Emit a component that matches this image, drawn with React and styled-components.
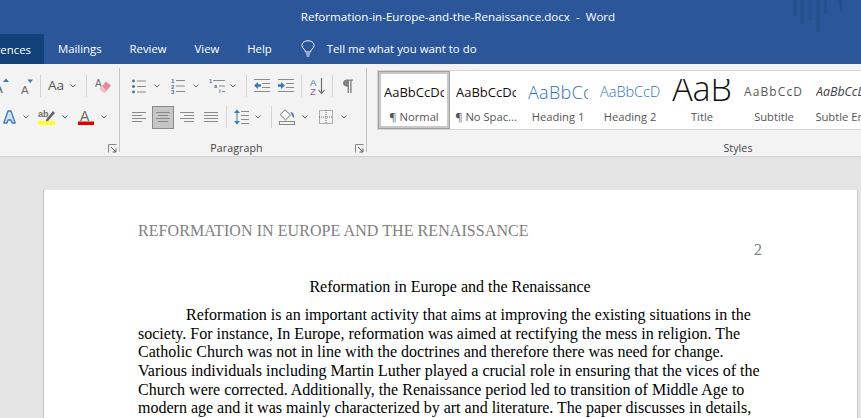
import styled, { createGlobalStyle } from "styled-components";

const GlobalStyle = createGlobalStyle`
  html, body {
    margin: 0;
    padding: 0;
    background: #e4e4e4;
  }
  body {
    font-family: "Open Sans", "Noto Sans", sans-serif;
  }
`

const Window = styled('div')`
  width: 861px;
  height: 418px;
  overflow: hidden;
  display: flex;
  flex-direction: column;
  background: #e4e4e4;
`

const TitleBar = styled('div')`
  position: relative;
  height: 32px;
  flex-shrink: 0;
  display: flex;
  align-items: center;
  justify-content: center;
  padding-left: 55px;
  background: #2b579a;
  color: #fff;
  font-size: 11.6px;
  white-space: pre;
`

const TitleArt = styled('svg')`
  position: absolute;
  top: 0;
  right: 18px;
`

const Tabs = styled('div')`
  height: 32px;
  flex-shrink: 0;
  display: flex;
  align-items: stretch;
  background: #2b579a;
  color: #fff;
  font-size: 11.4px;
`

const Tab = styled('div')`
  display: flex;
  align-items: center;
  padding: 0 13.9px;
`

const ActiveTab = styled(Tab)`
  width: 44px;
  box-sizing: border-box;
  justify-content: flex-end;
  overflow: hidden;
  padding: 0 13px 0 0;
  margin-top: 2px;
  background: #124078;
`

const TellMe = styled('div')`
  display: flex;
  align-items: center;
  gap: 12px;
  margin-left: 15px;
`

const Ribbon = styled('div')`
  height: 92px;
  flex-shrink: 0;
  display: flex;
  overflow: hidden;
  background: #f3f3f3;
  border-bottom: 1px solid #d2d2d2;
  color: #444;
`

const Group = styled('div')`
  position: relative;
  flex-shrink: 0;
  box-sizing: border-box;
  width: ${p => p.$w}px;
  display: flex;
  flex-direction: column;
  overflow: hidden;
  padding: 10px 0 0 ${p => p.$pl || 0}px;
`

const GroupEnd = styled('div')`
  flex-shrink: 0;
  width: 1px;
  margin: 4px 0 4px;
  background: #c4c4c4;
`

const Row = styled('div')`
  height: 24px;
  display: flex;
  align-items: center;
  margin-bottom: 7px;
`

const Tool = styled('div')`
  display: flex;
  align-items: center;
  flex-shrink: 0;
  gap: ${p => p.$gap ?? 6}px;
  margin-left: ${p => p.$ml || 0}px;
`

const Selected = styled(Tool)`
  width: 22px;
  height: 23px;
  justify-content: center;
  box-sizing: border-box;
  background: #c6c6c6;
  border: 1px solid #8a8a8a;
`

const Sep = styled('div')`
  width: 1px;
  height: 22px;
  flex-shrink: 0;
  margin-left: ${p => p.$ml || 0}px;
  background: #d4d4d4;
`

const CaseLabel = styled('span')`
  font-size: 13.5px;
  line-height: 1;
  color: #555;
`

const GroupFooter = styled('div')`
  margin-top: auto;
  display: flex;
  align-items: center;
  height: 16px;
  margin-left: ${p => p.$ml || 0}px;
`

const GroupLabel = styled('div')`
  flex: 1;
  text-align: center;
  font-size: 10.6px;
  letter-spacing: 0.1px;
  color: #444;
`

const Launcher = styled('svg')`
  flex-shrink: 0;
  margin: 0 2px 0 2px;
`

const Gallery = styled('div')`
  height: 60px;
  margin-top: -4px;
  margin-left: 10px;
  display: flex;
  box-sizing: border-box;
  background: #fff;
  border: 1px solid #d6d6d6;
`

const StyleItem = styled('div')`
  width: 72px;
  height: 100%;
  flex-shrink: 0;
  box-sizing: border-box;
  display: flex;
  flex-direction: column;
  align-items: center;
  border: 3px solid ${p => (p.$selected ? '#c8c8c8' : 'transparent')};
  outline: ${p => (p.$selected ? '1px solid #a0a0a0' : 'none')};
  outline-offset: -1px;
`

const Preview = styled('div')`
  width: 60px;
  height: 35px;
  flex-shrink: 0;
  box-sizing: border-box;
  display: flex;
  align-items: center;
  overflow: hidden;
  white-space: nowrap;
  line-height: 20px;
  font-size: ${p => p.$size}px;
  font-weight: ${p => p.$weight || 400};
  font-style: ${p => p.$italic ? 'italic' : 'normal'};
  letter-spacing: ${p => p.$spacing || 0}px;
  color: ${p => p.$color};
`

// the big Title sample is cut off by the top of its cell
const TitlePreview = styled(Preview)`
  height: 30px;
  margin-top: 5px;
  padding-bottom: 12px;
  justify-content: center;
`

const StyleName = styled('div')`
  font-size: 11.2px;
  line-height: 16px;
  white-space: nowrap;
  color: #555;
`

const DocArea = styled('div')`
  flex: 1;
  min-height: 0;
  padding: 33px 0 0 43px;
  background: #e4e4e4;
`

const Page = styled('div')`
  width: 815px;
  box-sizing: border-box;
  height: 400px;
  padding: 32px 95px 0 94px;
  background: #fff;
  border-left: 1px solid #c6c6c6;
  border-right: 1px solid #c6c6c6;
  font-family: "Liberation Serif", "Times New Roman", serif;
  font-size: 16px;
  line-height: 18.4px;
  color: #000;
`

const RunningHead = styled('div')`
  color: #808080;
  letter-spacing: 0.07px;
`

const PageNumber = styled('div')`
  text-align: right;
  color: #808080;
  margin-top: 1px;
`

const DocTitle = styled('div')`
  text-align: center;
  margin-top: 18px;
`

const BodyText = styled('p')`
  margin: 10px 0 0;
  line-height: 18.6px;
  text-indent: 48px;
`

const grey = '#6b6b6b'
const lightGrey = '#8a8a8a'
const blue = '#3f78b5'

const Chevron = () => (
  <svg width="6" height="4" viewBox="0 0 6 4">
    <path d="M0.5 0.5 L3 3 L5.5 0.5" fill="none" stroke="#666" strokeWidth="1" />
  </svg>
)

const Lines = ({ width = 14, rows }) => (
  <svg width={width} height="14" viewBox={`0 0 ${width} 14`}>
    {rows.map(([x1, x2, y], i) => (
      <line key={i} x1={x1} x2={x2} y1={y + 0.5} y2={y + 0.5} stroke={lightGrey} />
    ))}
  </svg>
)

const AlignLeft = () => <Lines rows={[[0, 14, 2], [0, 10, 5], [0, 14, 8], [0, 10, 11]]} />
const AlignCenter = () => <Lines rows={[[0, 14, 2], [2, 12, 5], [0, 14, 8], [2, 12, 11]]} />
const AlignRight = () => <Lines rows={[[0, 14, 2], [4, 14, 5], [0, 14, 8], [4, 14, 11]]} />
const Justify = () => <Lines rows={[[0, 14, 2], [0, 14, 5], [0, 14, 8], [0, 14, 11]]} />

const Bullets = () => (
  <svg width="14" height="15" viewBox="0 0 14 15">
    {[2, 7.5, 13].map(y => (
      <g key={y}>
        <circle cx="1.5" cy={y} r="1.4" fill="#4a6f9c" />
        <line x1="5" x2="14" y1={y} y2={y} stroke={lightGrey} />
      </g>
    ))}
  </svg>
)

const Numbering = () => (
  <svg width="14" height="16" viewBox="0 0 14 16">
    {['1', '2', '3'].map((n, i) => (
      <g key={n}>
        <text x="0" y={5 + i * 5.5} fontSize="6" fontWeight="700" fill="#4a6f9c" fontFamily="Liberation Sans">{n}</text>
        <line x1="5" x2="14" y1={2.5 + i * 5.5} y2={2.5 + i * 5.5} stroke={lightGrey} />
      </g>
    ))}
  </svg>
)

const Multilevel = () => (
  <svg width="16" height="16" viewBox="0 0 16 16">
    <text x="0" y="5" fontSize="5.5" fontWeight="700" fill="#4a6f9c" fontFamily="Liberation Sans">1</text>
    <line x1="4" x2="16" y1="2.5" y2="2.5" stroke={lightGrey} />
    <text x="5" y="10" fontSize="5.5" fontWeight="700" fill="#4a6f9c" fontFamily="Liberation Sans">a</text>
    <line x1="10" x2="16" y1="8" y2="8" stroke={lightGrey} />
    <text x="10" y="15" fontSize="5.5" fontWeight="700" fill="#4a6f9c" fontFamily="Liberation Sans">i</text>
    <line x1="13" x2="16" y1="13.5" y2="13.5" stroke={lightGrey} />
  </svg>
)

const IndentLess = () => (
  <svg width="16" height="14" viewBox="0 0 16 14">
    <line x1="0" x2="16" y1="0.5" y2="0.5" stroke={lightGrey} />
    <line x1="8" x2="16" y1="4.5" y2="4.5" stroke={lightGrey} />
    <line x1="8" x2="16" y1="8.5" y2="8.5" stroke={lightGrey} />
    <line x1="0" x2="16" y1="12.5" y2="12.5" stroke={lightGrey} />
    <path d="M0 6.5 L4 3 V5.3 H7 V7.7 H4 V10 Z" fill={blue} />
  </svg>
)

const IndentMore = () => (
  <svg width="16" height="14" viewBox="0 0 16 14">
    <line x1="0" x2="16" y1="0.5" y2="0.5" stroke={lightGrey} />
    <line x1="8" x2="16" y1="4.5" y2="4.5" stroke={lightGrey} />
    <line x1="8" x2="16" y1="8.5" y2="8.5" stroke={lightGrey} />
    <line x1="0" x2="16" y1="12.5" y2="12.5" stroke={lightGrey} />
    <path d="M7 6.5 L3 3 V5.3 H0 V7.7 H3 V10 Z" fill={blue} />
  </svg>
)

const Sort = () => (
  <svg width="15" height="17" viewBox="0 0 15 17">
    <text x="0" y="8" fontSize="9.5" fill={blue} fontFamily="Liberation Sans">A</text>
    <text x="0" y="16.5" fontSize="9.5" fill="#8e5aa8" fontFamily="Liberation Sans">Z</text>
    <path d="M11.5 0 V15 M8.5 12 L11.5 15.5 L14.5 12" fill="none" stroke="#666" strokeWidth="1.1" />
  </svg>
)

const Pilcrow = () => (
  <svg width="10" height="14" viewBox="0 0 10 14">
    <path d="M4 0.5 H10 V1.8 H8.6 V14 H7.2 V1.8 H6 V14 H4.6 V7.8 C1.5 7.8 0 6 0 4.1 C0 2 1.6 0.5 4 0.5 Z" fill="#808080" />
  </svg>
)

const LineSpacing = () => (
  <svg width="15" height="16" viewBox="0 0 15 16">
    <path d="M3 0.5 L6 4 H0 Z M3 15.5 L6 12 H0 Z" fill={blue} />
    <line x1="3" x2="3" y1="3" y2="13" stroke={blue} />
    {[2, 6, 10, 14].map(y => <line key={y} x1="7" x2="15" y1={y + 0.5} y2={y + 0.5} stroke={lightGrey} />)}
  </svg>
)

const Shading = () => (
  <svg width="16" height="16" viewBox="0 0 16 16">
    <path d="M6 0.8 L11.5 6 L6.5 10.8 L1.2 5.6 Z" fill="#fff" stroke={grey} />
    <path d="M11.5 3 C13.5 3 15 4.5 15 7.5 C15 9 13.5 9 13.5 7.5 Z" fill={blue} />
    <rect x="0.5" y="12.5" width="15" height="3" fill="#f3f3f3" stroke="#8a8a8a" />
  </svg>
)

const Borders = () => (
  <svg width="14" height="14" viewBox="0 0 14 14">
    <rect x="0.5" y="0.5" width="13" height="13" fill="none" stroke={grey} strokeDasharray="1 1" />
    <line x1="7" x2="7" y1="0" y2="14" stroke={grey} strokeDasharray="1 1" />
    <line x1="0" x2="14" y1="7" y2="7" stroke={grey} strokeDasharray="1 1" />
  </svg>
)

const FontGrow = () => (
  <svg width="16" height="16" viewBox="0 0 16 16">
    <text x="0" y="15" fontSize="15" fill={grey} fontFamily="Liberation Sans">A</text>
    <path d="M10 4 L13 0.5 L16 4 Z" fill={blue} />
  </svg>
)

const FontShrink = () => (
  <svg width="12" height="15" viewBox="0 0 12 15">
    <text x="0" y="14.5" fontSize="11.5" fill={grey} fontFamily="Liberation Sans">A</text>
    <path d="M6.5 0.5 H12 L9.2 4 Z" fill={blue} />
  </svg>
)

const ClearFormat = () => (
  <svg width="17" height="16" viewBox="0 0 17 16">
    <text x="0" y="9" fontSize="10" fill={grey} fontFamily="Liberation Sans">A</text>
    <path d="M4.5 11 L11 3.5 L16 7.5 L9.5 15 Z" fill="#e58a9b" />
    <path d="M4.5 11 L7 8 L11 12 L9.5 15 Z" fill="#f3c3cd" />
  </svg>
)

const TextEffects = () => (
  <svg width="13" height="14" viewBox="0 0 13 14">
    <path d="M0.8 13 L5 1 H8 L12.2 13 H9 L8 10 H5 L4 13 Z" fill="#cfe0f2" stroke={blue} strokeWidth="1.3" strokeLinejoin="round" />
  </svg>
)

const Highlight = () => (
  <svg width="18" height="16" viewBox="0 0 18 16">
    <text x="0" y="8" fontSize="9" fontWeight="700" fill={grey} fontFamily="Liberation Sans">ab</text>
    <path d="M8 10.5 L15 2 L17 4 L10 12 H8 Z" fill="#666" />
    <rect x="0" y="12" width="17" height="4" fill="#ffff30" />
  </svg>
)

const FontColor = () => (
  <svg width="16" height="16" viewBox="0 0 16 16">
    <text x="2" y="11.5" fontSize="14" fill={grey} fontFamily="Liberation Sans">A</text>
    <rect x="0" y="12.5" width="16" height="3.5" fill="#e00000" />
  </svg>
)

const Bulb = () => (
  <svg width="14" height="17" viewBox="0 0 14 17">
    <path d="M4.5 12 C4.5 9.5 1 8.5 1 5.5 C1 2.8 3.5 0.8 7 0.8 C10.5 0.8 13 2.8 13 5.5 C13 8.5 9.5 9.5 9.5 12 Z" fill="none" stroke="#fff" />
    <path d="M5 14 H9 M5.5 16 H8.5" stroke="#fff" />
  </svg>
)

const DialogLauncher = () => (
  <Launcher width="9" height="9" viewBox="0 0 9 9">
    <path d="M0.5 8.5 V0.5 H8.5" fill="none" stroke="#8a8a8a" />
    <path d="M3 3 L8 8 M8 4.5 V8 H4.5" fill="none" stroke="#666" />
  </Launcher>
)

const galleryStyles = [
  { name: '¶ Normal', preview: 'AaBbCcDc', size: 13, color: '#111', selected: true },
  { name: '¶ No Spac...', preview: 'AaBbCcDc', size: 13, color: '#111' },
  { name: 'Heading 1', preview: 'AaBbCc', size: 18, color: '#2e74b5', weight: 300, spacing: 0.3 },
  { name: 'Heading 2', preview: 'AaBbCcD', size: 14.5, color: '#2e74b5', weight: 300 },
  { name: 'Title', preview: 'AaB', size: 34, color: '#111', weight: 300, big: true },
  { name: 'Subtitle', preview: 'AaBbCcD', size: 12, color: '#595959', spacing: 1.1 },
  { name: 'Subtle Em...', preview: 'AaBbCcDc', size: 12.4, color: '#404040', italic: true },
]

const App = () => {
  return (
    <Window>
      <GlobalStyle />
      <TitleBar>
        Reformation-in-Europe-and-the-Renaissance.docx  -  Word
        <TitleArt width="50" height="32" viewBox="0 0 50 32">
          <rect x="0" y="0" width="4" height="16" fill="#224a85" opacity="0.6" />
          <rect x="7" y="0" width="4" height="24" fill="#224a85" opacity="0.6" />
          <rect x="15" y="0" width="4" height="20" fill="#224a85" opacity="0.55" />
          <rect x="23" y="0" width="4" height="32" fill="#224a85" opacity="0.6" />
          <rect x="31" y="0" width="3" height="14" fill="#224a85" opacity="0.5" />
          <path d="M44 0 H49 L49 13 Z" fill="#224a85" opacity="0.6" />
        </TitleArt>
      </TitleBar>
      <Tabs>
        <ActiveTab>References</ActiveTab>
        <Tab>Mailings</Tab>
        <Tab>Review</Tab>
        <Tab>View</Tab>
        <Tab>Help</Tab>
        <TellMe>
          <Bulb />
          Tell me what you want to do
        </TellMe>
      </Tabs>
      <Ribbon>
        <Group $w={119}>
          <Row>
            <Tool $ml={-7}><FontGrow /></Tool>
            <Tool $ml={12}><FontShrink /></Tool>
            <Sep $ml={7} />
            <Tool $ml={7}><CaseLabel>Aa</CaseLabel><Chevron /></Tool>
            <Sep $ml={10} />
            <Tool $ml={8}><ClearFormat /></Tool>
          </Row>
          <Row>
            <Tool $ml={3} $gap={7}><TextEffects /><Chevron /></Tool>
            <Tool $ml={9}><Highlight /><Chevron /></Tool>
            <Tool $ml={10} $gap={7}><FontColor /><Chevron /></Tool>
          </Row>
          <GroupFooter>
            <GroupLabel />
            <DialogLauncher />
          </GroupFooter>
        </Group>
        <GroupEnd />
        <Group $w={246} $pl={12}>
          <Row>
            <Tool $gap={8}><Bullets /><Chevron /></Tool>
            <Tool $ml={11} $gap={8}><Numbering /><Chevron /></Tool>
            <Tool $ml={10} $gap={5}><Multilevel /><Chevron /></Tool>
            <Sep $ml={10} />
            <Tool $ml={7}><IndentLess /></Tool>
            <Tool $ml={8}><IndentMore /></Tool>
            <Sep $ml={7} />
            <Tool $ml={8}><Sort /></Tool>
            <Sep $ml={7} />
            <Tool $ml={10}><Pilcrow /></Tool>
          </Row>
          <Row>
            <Tool><AlignLeft /></Tool>
            <Selected $ml={6}><AlignCenter /></Selected>
            <Tool $ml={6}><AlignRight /></Tool>
            <Tool $ml={10}><Justify /></Tool>
            <Sep $ml={8} />
            <Tool $ml={7}><LineSpacing /><Chevron /></Tool>
            <Sep $ml={10} />
            <Tool $ml={7} $gap={7}><Shading /><Chevron /></Tool>
            <Tool $ml={11} $gap={8}><Borders /><Chevron /></Tool>
          </Row>
          <GroupFooter $ml={-12}>
            <GroupLabel>Paragraph</GroupLabel>
            <DialogLauncher />
          </GroupFooter>
        </Group>
        <GroupEnd />
        <Group $w={742}>
          <Gallery>
            {galleryStyles.map(s => {
              const Sample = s.big ? TitlePreview : Preview
              return (
                <StyleItem key={s.name} $selected={s.selected}>
                  <Sample $size={s.size} $color={s.color} $spacing={s.spacing} $weight={s.weight} $italic={s.italic}>
                    {s.preview}
                  </Sample>
                  <StyleName>{s.name}</StyleName>
                </StyleItem>
              )
            })}
          </Gallery>
          <GroupFooter>
            <GroupLabel>Styles</GroupLabel>
          </GroupFooter>
        </Group>
      </Ribbon>
      <DocArea>
        <Page>
          <RunningHead>REFORMATION IN EUROPE AND THE RENAISSANCE</RunningHead>
          <PageNumber>2</PageNumber>
          <DocTitle>Reformation in Europe and the Renaissance</DocTitle>
          <BodyText>
            Reformation is an important activity that aims at improving the existing situations in the
            society. For instance, In Europe, reformation was aimed at rectifying the mess in religion. The
            Catholic Church was not in line with the doctrines and therefore there was need for change.
            Various individuals including Martin Luther played a crucial role in ensuring that the vices of the
            Church were corrected. Additionally, the Renaissance period led to transition of Middle Age to
            modern age and it was mainly characterized by art and literature. The paper discusses in details,
          </BodyText>
        </Page>
      </DocArea>
    </Window>
  )
}

export default App
